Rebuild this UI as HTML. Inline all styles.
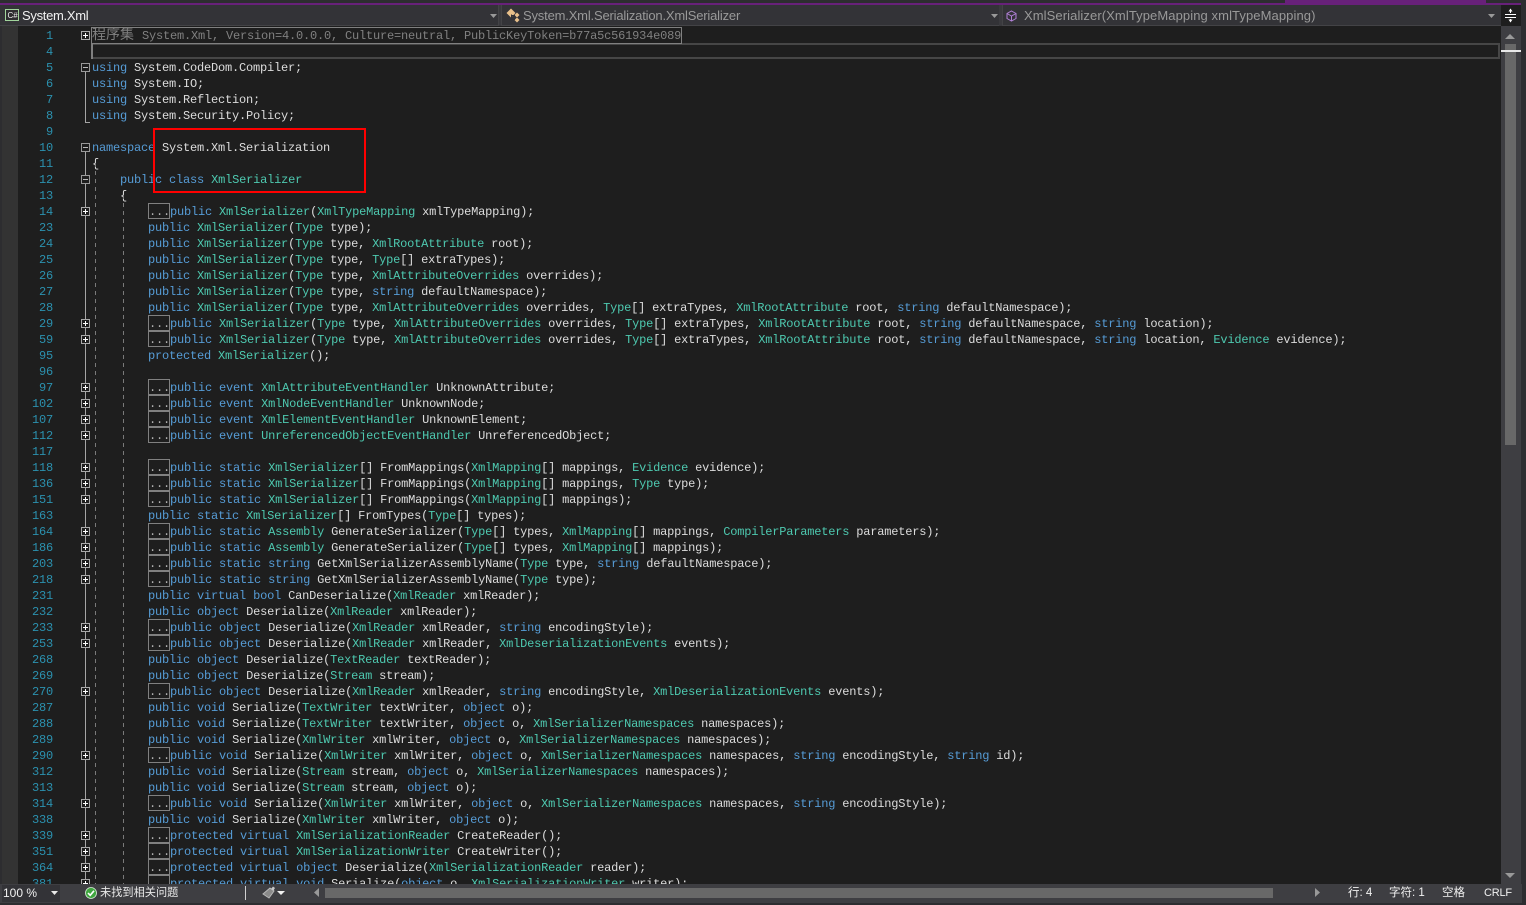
<!DOCTYPE html>
<html><head><meta charset="utf-8"><style>
html,body{margin:0;padding:0;width:1526px;height:905px;overflow:hidden;background:#2d2d30}
*{box-sizing:border-box}
#ed{position:absolute;left:0;top:0;width:1501px;height:884px;background:#1e1e1e;overflow:hidden}
#rows{position:absolute;left:0;top:27px;width:1501px;height:857px;overflow:hidden;font:12px/16px "Liberation Mono",monospace;letter-spacing:-.2px;color:#dcdcdc}
.r{position:relative;height:16px;white-space:pre}
.r a{position:absolute;left:18px;top:1px;width:35px;text-align:right;color:#2b91af}
.r code{position:absolute;left:92px;top:1px;font:inherit;white-space:pre}
.r b{font-weight:normal;color:#569cd6}
.r i{font-style:normal;color:#4ec9b0}
.r s{display:inline-block;width:22px;height:16px;margin-top:-1px;border:1px solid #808080;color:#b0b0b0;text-decoration:none;vertical-align:top;line-height:16px}
.r em{position:absolute;left:81px;top:4px;width:9px;height:9px;border:1px solid #aaa;background:#1e1e1e;z-index:3}
.r em::before{content:"";position:absolute;left:1px;top:3px;width:5px;height:1px;background:#fff}
.r em.p::after{content:"";position:absolute;left:3px;top:1px;width:1px;height:5px;background:#fff}
.r em.m{border-color:#999}
.r em.m::before{background:#bbb}
.g{color:#808080}
.vl{position:absolute;left:85px;width:1px;background:#a5a5a5;z-index:2}
.ds{position:absolute;width:1px;background:repeating-linear-gradient(to bottom,#7a7a7a 0 4px,transparent 4px 8px);z-index:2}
.nv{font:13px/21px "Liberation Sans",sans-serif;white-space:nowrap}
.st{font:12px/19px "Liberation Sans","Noto Sans CJK SC",sans-serif;color:#f1f1f1;white-space:nowrap}
</style></head><body>
<div id="ed">
<div style="position:absolute;left:0;top:26px;width:2px;height:858px;background:#2d2d30"></div>
<div style="position:absolute;left:2px;top:26px;width:16px;height:858px;background:#333333"></div>
<div class="vl" style="top:71px;height:52px"></div>
<div style="position:absolute;left:85px;top:122px;width:5px;height:1px;background:#a5a5a5"></div>
<div class="vl" style="top:152px;height:732px"></div>
<div class="ds" style="left:95px;top:163px;height:721px"></div>
<div class="ds" style="left:123px;top:195px;height:689px"></div>
<div style="position:absolute;left:91px;top:43px;width:1409px;height:16px;border:1px solid #464646;border-width:2px 2px 2px 0"></div>
<div style="position:absolute;left:91px;top:27px;width:591px;height:17px;border:1px solid #808080"></div>
<div style="position:absolute;left:91px;top:43px;width:2px;height:16px;background:#808080"></div>
<div id="rows">
<div class="r"><a>1</a><em class="p"></em><code class="g"><span style="font:14px/0 'Noto Sans CJK SC',sans-serif;letter-spacing:0;margin-right:1px">程序集</span> System.Xml, Version=4.0.0.0, Culture=neutral, PublicKeyToken=b77a5c561934e089</code></div>
<div class="r"><a>4</a></div>
<div class="r"><a>5</a><em class="m"></em><code><b>using</b> System.CodeDom.Compiler;</code></div>
<div class="r"><a>6</a><code><b>using</b> System.IO;</code></div>
<div class="r"><a>7</a><code><b>using</b> System.Reflection;</code></div>
<div class="r"><a>8</a><code><b>using</b> System.Security.Policy;</code></div>
<div class="r"><a>9</a></div>
<div class="r"><a>10</a><em class="m"></em><code><b>namespace</b> System.Xml.Serialization</code></div>
<div class="r"><a>11</a><code>{</code></div>
<div class="r"><a>12</a><em class="m"></em><code>    <b>public</b> <b>class</b> <i>XmlSerializer</i></code></div>
<div class="r"><a>13</a><code>    {</code></div>
<div class="r"><a>14</a><em class="p"></em><code>        <s>...</s><b>public</b> <i>XmlSerializer</i>(<i>XmlTypeMapping</i> xmlTypeMapping);</code></div>
<div class="r"><a>23</a><code>        <b>public</b> <i>XmlSerializer</i>(<i>Type</i> type);</code></div>
<div class="r"><a>24</a><code>        <b>public</b> <i>XmlSerializer</i>(<i>Type</i> type, <i>XmlRootAttribute</i> root);</code></div>
<div class="r"><a>25</a><code>        <b>public</b> <i>XmlSerializer</i>(<i>Type</i> type, <i>Type</i>[] extraTypes);</code></div>
<div class="r"><a>26</a><code>        <b>public</b> <i>XmlSerializer</i>(<i>Type</i> type, <i>XmlAttributeOverrides</i> overrides);</code></div>
<div class="r"><a>27</a><code>        <b>public</b> <i>XmlSerializer</i>(<i>Type</i> type, <b>string</b> defaultNamespace);</code></div>
<div class="r"><a>28</a><code>        <b>public</b> <i>XmlSerializer</i>(<i>Type</i> type, <i>XmlAttributeOverrides</i> overrides, <i>Type</i>[] extraTypes, <i>XmlRootAttribute</i> root, <b>string</b> defaultNamespace);</code></div>
<div class="r"><a>29</a><em class="p"></em><code>        <s>...</s><b>public</b> <i>XmlSerializer</i>(<i>Type</i> type, <i>XmlAttributeOverrides</i> overrides, <i>Type</i>[] extraTypes, <i>XmlRootAttribute</i> root, <b>string</b> defaultNamespace, <b>string</b> location);</code></div>
<div class="r"><a>59</a><em class="p"></em><code>        <s>...</s><b>public</b> <i>XmlSerializer</i>(<i>Type</i> type, <i>XmlAttributeOverrides</i> overrides, <i>Type</i>[] extraTypes, <i>XmlRootAttribute</i> root, <b>string</b> defaultNamespace, <b>string</b> location, <i>Evidence</i> evidence);</code></div>
<div class="r"><a>95</a><code>        <b>protected</b> <i>XmlSerializer</i>();</code></div>
<div class="r"><a>96</a></div>
<div class="r"><a>97</a><em class="p"></em><code>        <s>...</s><b>public</b> <b>event</b> <i>XmlAttributeEventHandler</i> UnknownAttribute;</code></div>
<div class="r"><a>102</a><em class="p"></em><code>        <s>...</s><b>public</b> <b>event</b> <i>XmlNodeEventHandler</i> UnknownNode;</code></div>
<div class="r"><a>107</a><em class="p"></em><code>        <s>...</s><b>public</b> <b>event</b> <i>XmlElementEventHandler</i> UnknownElement;</code></div>
<div class="r"><a>112</a><em class="p"></em><code>        <s>...</s><b>public</b> <b>event</b> <i>UnreferencedObjectEventHandler</i> UnreferencedObject;</code></div>
<div class="r"><a>117</a></div>
<div class="r"><a>118</a><em class="p"></em><code>        <s>...</s><b>public</b> <b>static</b> <i>XmlSerializer</i>[] FromMappings(<i>XmlMapping</i>[] mappings, <i>Evidence</i> evidence);</code></div>
<div class="r"><a>136</a><em class="p"></em><code>        <s>...</s><b>public</b> <b>static</b> <i>XmlSerializer</i>[] FromMappings(<i>XmlMapping</i>[] mappings, <i>Type</i> type);</code></div>
<div class="r"><a>151</a><em class="p"></em><code>        <s>...</s><b>public</b> <b>static</b> <i>XmlSerializer</i>[] FromMappings(<i>XmlMapping</i>[] mappings);</code></div>
<div class="r"><a>163</a><code>        <b>public</b> <b>static</b> <i>XmlSerializer</i>[] FromTypes(<i>Type</i>[] types);</code></div>
<div class="r"><a>164</a><em class="p"></em><code>        <s>...</s><b>public</b> <b>static</b> <i>Assembly</i> GenerateSerializer(<i>Type</i>[] types, <i>XmlMapping</i>[] mappings, <i>CompilerParameters</i> parameters);</code></div>
<div class="r"><a>186</a><em class="p"></em><code>        <s>...</s><b>public</b> <b>static</b> <i>Assembly</i> GenerateSerializer(<i>Type</i>[] types, <i>XmlMapping</i>[] mappings);</code></div>
<div class="r"><a>203</a><em class="p"></em><code>        <s>...</s><b>public</b> <b>static</b> <b>string</b> GetXmlSerializerAssemblyName(<i>Type</i> type, <b>string</b> defaultNamespace);</code></div>
<div class="r"><a>218</a><em class="p"></em><code>        <s>...</s><b>public</b> <b>static</b> <b>string</b> GetXmlSerializerAssemblyName(<i>Type</i> type);</code></div>
<div class="r"><a>231</a><code>        <b>public</b> <b>virtual</b> <b>bool</b> CanDeserialize(<i>XmlReader</i> xmlReader);</code></div>
<div class="r"><a>232</a><code>        <b>public</b> <b>object</b> Deserialize(<i>XmlReader</i> xmlReader);</code></div>
<div class="r"><a>233</a><em class="p"></em><code>        <s>...</s><b>public</b> <b>object</b> Deserialize(<i>XmlReader</i> xmlReader, <b>string</b> encodingStyle);</code></div>
<div class="r"><a>253</a><em class="p"></em><code>        <s>...</s><b>public</b> <b>object</b> Deserialize(<i>XmlReader</i> xmlReader, <i>XmlDeserializationEvents</i> events);</code></div>
<div class="r"><a>268</a><code>        <b>public</b> <b>object</b> Deserialize(<i>TextReader</i> textReader);</code></div>
<div class="r"><a>269</a><code>        <b>public</b> <b>object</b> Deserialize(<i>Stream</i> stream);</code></div>
<div class="r"><a>270</a><em class="p"></em><code>        <s>...</s><b>public</b> <b>object</b> Deserialize(<i>XmlReader</i> xmlReader, <b>string</b> encodingStyle, <i>XmlDeserializationEvents</i> events);</code></div>
<div class="r"><a>287</a><code>        <b>public</b> <b>void</b> Serialize(<i>TextWriter</i> textWriter, <b>object</b> o);</code></div>
<div class="r"><a>288</a><code>        <b>public</b> <b>void</b> Serialize(<i>TextWriter</i> textWriter, <b>object</b> o, <i>XmlSerializerNamespaces</i> namespaces);</code></div>
<div class="r"><a>289</a><code>        <b>public</b> <b>void</b> Serialize(<i>XmlWriter</i> xmlWriter, <b>object</b> o, <i>XmlSerializerNamespaces</i> namespaces);</code></div>
<div class="r"><a>290</a><em class="p"></em><code>        <s>...</s><b>public</b> <b>void</b> Serialize(<i>XmlWriter</i> xmlWriter, <b>object</b> o, <i>XmlSerializerNamespaces</i> namespaces, <b>string</b> encodingStyle, <b>string</b> id);</code></div>
<div class="r"><a>312</a><code>        <b>public</b> <b>void</b> Serialize(<i>Stream</i> stream, <b>object</b> o, <i>XmlSerializerNamespaces</i> namespaces);</code></div>
<div class="r"><a>313</a><code>        <b>public</b> <b>void</b> Serialize(<i>Stream</i> stream, <b>object</b> o);</code></div>
<div class="r"><a>314</a><em class="p"></em><code>        <s>...</s><b>public</b> <b>void</b> Serialize(<i>XmlWriter</i> xmlWriter, <b>object</b> o, <i>XmlSerializerNamespaces</i> namespaces, <b>string</b> encodingStyle);</code></div>
<div class="r"><a>338</a><code>        <b>public</b> <b>void</b> Serialize(<i>XmlWriter</i> xmlWriter, <b>object</b> o);</code></div>
<div class="r"><a>339</a><em class="p"></em><code>        <s>...</s><b>protected</b> <b>virtual</b> <i>XmlSerializationReader</i> CreateReader();</code></div>
<div class="r"><a>351</a><em class="p"></em><code>        <s>...</s><b>protected</b> <b>virtual</b> <i>XmlSerializationWriter</i> CreateWriter();</code></div>
<div class="r"><a>364</a><em class="p"></em><code>        <s>...</s><b>protected</b> <b>virtual</b> <b>object</b> Deserialize(<i>XmlSerializationReader</i> reader);</code></div>
<div class="r"><a>381</a><em class="p"></em><code>        <s>...</s><b>protected</b> <b>virtual</b> <b>void</b> Serialize(<b>object</b> o, <i>XmlSerializationWriter</i> writer);</code></div>
</div>
<div style="position:absolute;left:153px;top:128px;width:213px;height:65px;border:2px solid #f00;z-index:5"></div>
</div>

<!-- top -->
<div style="position:absolute;left:0;top:0;width:1526px;height:3px;background:#2d2d30"></div>
<div style="position:absolute;left:1285px;top:0;width:201px;height:3px;background:#68217a"></div>
<div style="position:absolute;left:0;top:3px;width:1521px;height:2px;background:#68217a"></div>
<div style="position:absolute;left:0;top:5px;width:1501px;height:21px;background:#333337"></div>
<div style="position:absolute;left:0;top:25px;width:1501px;height:1px;background:#434346"></div>
<div style="position:absolute;left:498px;top:5px;width:4px;height:21px;background:#3a3a3e;border-left:1px solid #434346;border-right:1px solid #434346"></div>
<div style="position:absolute;left:999px;top:5px;width:4px;height:21px;background:#3a3a3e;border-right:1px solid #434346"></div>
<svg style="position:absolute;left:5px;top:9px" width="15" height="13"><rect x=".5" y=".5" width="13" height="11" fill="#2d2d30" stroke="#a1d49c"/><text x="2.500" y="9" font-family="Liberation Sans" font-size="8" fill="#f1f1f1">C#</text></svg>
<div class="nv" style="position:absolute;left:22px;top:5px;color:#f1f1f1;letter-spacing:-.3px">System.Xml</div>
<svg style="position:absolute;left:490px;top:14px" width="8" height="5"><path d="M0 0H7L3.500 4Z" fill="#999"/></svg>
<svg style="position:absolute;left:506px;top:8px" width="15" height="15"><g fill="#e8c08a"><path d="M0.500 5 5 0.500 9.500 5 5 9.500Z"/><path d="M8.500 7 11 4.500 13.500 7 11 9.500Z"/><path d="M8.500 12 11 9.500 13.500 12 11 14.500Z"/></g><path d="M5.500 6.500V11.500H9M5.500 7.500H9" stroke="#333337" fill="none"/></svg>
<div class="nv" style="position:absolute;left:523px;top:5px;color:#999;letter-spacing:-.18px">System.Xml.Serialization.XmlSerializer</div>
<svg style="position:absolute;left:991px;top:14px" width="8" height="5"><path d="M0 0H7L3.500 4Z" fill="#999"/></svg>
<svg style="position:absolute;left:1006px;top:10px" width="12" height="12"><path d="M5.500 1 10 3.500V8.500L5.500 11 1 8.500V3.500ZM1 3.500 5.500 6 10 3.500M5.500 6V11" fill="none" stroke="#b180d7"/></svg>
<div class="nv" style="position:absolute;left:1024px;top:5px;color:#999;letter-spacing:.09px">XmlSerializer(XmlTypeMapping xmlTypeMapping)</div>
<svg style="position:absolute;left:1488px;top:14px" width="8" height="5"><path d="M0 0H7L3.500 4Z" fill="#999"/></svg>
<div style="position:absolute;left:1501px;top:5px;width:20px;height:21px;background:#1e1e1e"></div>
<svg style="position:absolute;left:1505px;top:8px" width="12" height="15"><path d="M0 6.500H11M0 9.500H11M5.500 2V5M5.500 11V14" stroke="#fff" fill="none"/><path d="M3.500 3.500 5.500 0.500 7.500 3.500ZM3.500 11.500 5.500 14.500 7.500 11.500Z" fill="#fff"/></svg>

<!-- scrollbar -->
<div style="position:absolute;left:1501px;top:26px;width:20px;height:858px;background:#3e3e42"></div>
<svg style="position:absolute;left:1505px;top:33px" width="11" height="6"><path d="M0 6H10L5 1Z" fill="#999"/></svg>
<div style="position:absolute;left:1505px;top:44px;width:11px;height:401px;background:#686868"></div>
<div style="position:absolute;left:1501px;top:50px;width:20px;height:2px;background:#e8e8e8"></div>
<svg style="position:absolute;left:1505px;top:873px" width="11" height="6"><path d="M0 0H10L5 5Z" fill="#999"/></svg>

<!-- status -->
<div style="position:absolute;left:0;top:884px;width:1522px;height:19px;background:#3e3e42"></div>
<div style="position:absolute;left:2px;top:885px;width:58px;height:17px;background:#333337"></div>
<div class="st" style="position:absolute;left:3px;top:884px">100 %</div>
<svg style="position:absolute;left:51px;top:891px" width="8" height="5"><path d="M0 0H7L3.500 4Z" fill="#e8e8e8"/></svg>
<svg style="position:absolute;left:85px;top:887px" width="12" height="12"><circle cx="6" cy="6" r="5.500" fill="#3fa63f" stroke="#d8eed8" stroke-width=".8"/><path d="M3 6 5.200 8.300 9 3.800" fill="none" stroke="#fff" stroke-width="1.600"/></svg>
<div class="st" style="position:absolute;left:100px;top:884px;font-size:11.200px;color:#e8e8e8">未找到相关问题</div>
<div style="position:absolute;left:245px;top:886px;width:1px;height:14px;background:#d0d0d0"></div>
<svg style="position:absolute;left:261px;top:886px" width="15" height="13"><path d="M9 2 13 5 8 12 2 8Z" fill="#8a8a8a" stroke="#b8b8b8"/><path d="M10 3 12 0.500 14 2 12.500 4.500Z" fill="#c8c8c8"/></svg>
<svg style="position:absolute;left:277px;top:891px" width="8" height="5"><path d="M0 0H8L4 4Z" fill="#f1f1f1"/></svg>
<svg style="position:absolute;left:314px;top:888px" width="6" height="10"><path d="M5 0V9L0 4.500Z" fill="#999"/></svg>
<div style="position:absolute;left:325px;top:888px;width:948px;height:10px;background:#686868"></div>
<svg style="position:absolute;left:1315px;top:888px" width="6" height="10"><path d="M0 0V9L5 4.500Z" fill="#999"/></svg>
<div class="st" style="position:absolute;left:1348px;top:884px;font-size:11.500px">行: 4</div>
<div class="st" style="position:absolute;left:1389px;top:884px;font-size:11.500px">字符: 1</div>
<div class="st" style="position:absolute;left:1442px;top:884px;font-size:11.500px">空格</div>
<div class="st" style="position:absolute;left:1484px;top:884px;font-size:11px;letter-spacing:-.2px">CRLF</div>
</body></html>
